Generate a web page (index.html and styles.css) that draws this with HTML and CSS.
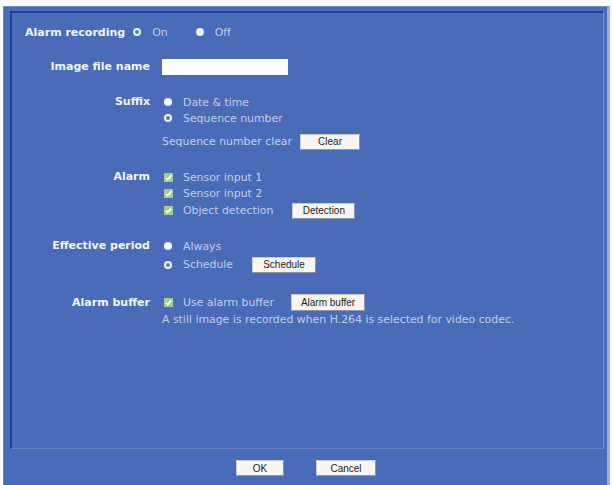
FILE: index.html
```html
<!DOCTYPE html>
<html>
<head>
<meta charset="utf-8">
<link rel="stylesheet" href="styles.css">
</head>
<body>
<div class="frame">
  <div class="panel">
    <div class="top-row">
      <span class="lbl">Alarm recording</span>
      <span class="radio on r-on"></span><span class="opt">On</span>
      <span class="radio r-off"></span><span class="opt">Off</span>
    </div>

    <div class="grid">
      <div class="lbl key sec1">Image file name</div>
      <div class="val sec1"><span class="input"></span></div>

      <div class="lbl key sec">Suffix</div>
      <div class="val sec">
        <div class="line"><span class="radio"></span><span class="opt">Date &amp; time</span></div>
        <div class="line"><span class="radio on"></span><span class="opt">Sequence number</span></div>
        <div class="line btnline mt7"><span class="opt plain">Sequence number clear</span><span class="btn w60 ml8">Clear</span></div>
      </div>

      <div class="lbl key sec">Alarm</div>
      <div class="val sec">
        <div class="line"><span class="chk"><svg width="9" height="9" viewBox="0 0 9 9"><rect width="9" height="9" fill="#9fcf8a"/><path d="M1.8 4.6 L3.7 6.5 L7.3 2.4" stroke="#fff" stroke-width="1.6" fill="none"/></svg></span><span class="opt">Sensor input 1</span></div>
        <div class="line"><span class="chk"><svg width="9" height="9" viewBox="0 0 9 9"><rect width="9" height="9" fill="#9fcf8a"/><path d="M1.8 4.6 L3.7 6.5 L7.3 2.4" stroke="#fff" stroke-width="1.6" fill="none"/></svg></span><span class="opt">Sensor input 2</span></div>
        <div class="line btnline mt1"><span class="chk"><svg width="9" height="9" viewBox="0 0 9 9"><rect width="9" height="9" fill="#9fcf8a"/><path d="M1.8 4.6 L3.7 6.5 L7.3 2.4" stroke="#fff" stroke-width="1.6" fill="none"/></svg></span><span class="opt">Object detection</span><span class="btn w63 ml19">Detection</span></div>
      </div>

      <div class="lbl key sec">Effective period</div>
      <div class="val sec">
        <div class="line"><span class="radio"></span><span class="opt">Always</span></div>
        <div class="line btnline mt2"><span class="radio on"></span><span class="opt">Schedule</span><span class="btn w64 ml19">Schedule</span></div>
      </div>

      <div class="lbl key sec2">Alarm buffer</div>
      <div class="val sec2">
        <div class="line btnline"><span class="chk"><svg width="9" height="9" viewBox="0 0 9 9"><rect width="9" height="9" fill="#9fcf8a"/><path d="M1.8 4.6 L3.7 6.5 L7.3 2.4" stroke="#fff" stroke-width="1.6" fill="none"/></svg></span><span class="opt">Use alarm buffer</span><span class="btn w74 ml17">Alarm buffer</span></div>
        <div class="line"><span class="opt plain">A still image is recorded when H.264 is selected for video codec.</span></div>
      </div>
    </div>
  </div>
  <div class="footer">
    <span class="btn w48">OK</span>
    <span class="btn w60">Cancel</span>
  </div>
</div>
</body>
</html>
```

FILE: styles.css
```css
html, body {
  margin: 0;
  padding: 0;
  background: #fbfcfe;
  height: 485px;
  overflow: hidden;
}

body {
  font-family: "DejaVu Sans", Verdana, sans-serif;
  font-size: 11px;
}

.frame {
  margin: 6px 2px 0 3px;
  height: 479px;
  box-sizing: border-box;
  background: #4a6bb7;
  border-left: 1px solid #6d88c8;
  border-right: 3px solid #9aaedc;
  border-top: 1px solid #6f8ac9;
  padding: 4px 3px 0 6px;
}

.panel {
  height: 438px;
  box-sizing: border-box;
  border-top: 2px solid #22408a;
  border-left: 2px solid #22408a;
  border-right: 1px solid #7a93cf;
  border-bottom: 1px solid #6882c4;
  padding-top: 11px;
}

.lbl {
  color: #f3f5fb;
  font-weight: bold;
  font-size: 11px;
  white-space: nowrap;
}

.opt {
  color: #c3cde8;
  white-space: nowrap;
  font-size: 10.9px;
}

.top-row {
  display: flex;
  align-items: center;
  height: 16px;
  padding-left: 13px;
}

.top-row .r-on {
  margin-left: 8px;
}

.top-row .r-off {
  margin-left: 28px;
}

.grid {
  display: grid;
  grid-template-columns: 138px auto;
  column-gap: 12px;
  justify-content: start;
}

.key {
  text-align: right;
  line-height: 16px;
}

.sec1 {
  margin-top: 19px;
}

.sec {
  margin-top: 19px;
}

.sec2 {
  margin-top: 21px;
}

.sec2.key {
  line-height: 17px;
}

.line {
  display: flex;
  align-items: center;
  height: 16px;
}

.btnline {
  height: 17px;
}

.mt7 { margin-top: 7px; }
.mt1 { margin-top: 1px; }
.mt2 { margin-top: 2px; }

.input {
  display: block;
  width: 126px;
  height: 16px;
  background: #fdfdfd;
}

.radio {
  display: inline-block;
  width: 8px;
  height: 8px;
  border-radius: 50%;
  background: #f2f4f8;
  margin-left: 2px;
  margin-right: 11px;
  flex: none;
}

.radio.on {
  box-sizing: border-box;
  border: 2px solid #eef2f6;
  background: #4f8a6a;
}

.top-row .radio {
  margin-right: 11px;
}

.chk {
  display: inline-flex;
  margin-left: 2px;
  margin-right: 10px;
  flex: none;
}

.plain {
  margin-left: 0;
}

.btn {
  display: inline-flex;
  align-items: center;
  justify-content: center;
  box-sizing: border-box;
  height: 16px;
  background: #f6f5ef;
  border: 1px solid #c9c9c4;
  border-right-color: #8f95a8;
  border-bottom-color: #8f95a8;
  color: #1e1e1e;
  font-family: "Liberation Sans", Arial, sans-serif;
  font-size: 10px;
  flex: none;
}

.w48 { width: 48px; }
.w60 { width: 60px; }
.w63 { width: 63px; }
.w64 { width: 64px; }
.w74 { width: 74px; height: 17px; }

.ml8 { margin-left: 8px; }
.ml17 { margin-left: 17px; }
.ml19 { margin-left: 19px; }

.footer {
  display: flex;
  justify-content: center;
  gap: 32px;
  margin-top: 11px;
  padding-right: 2px;
}
```
